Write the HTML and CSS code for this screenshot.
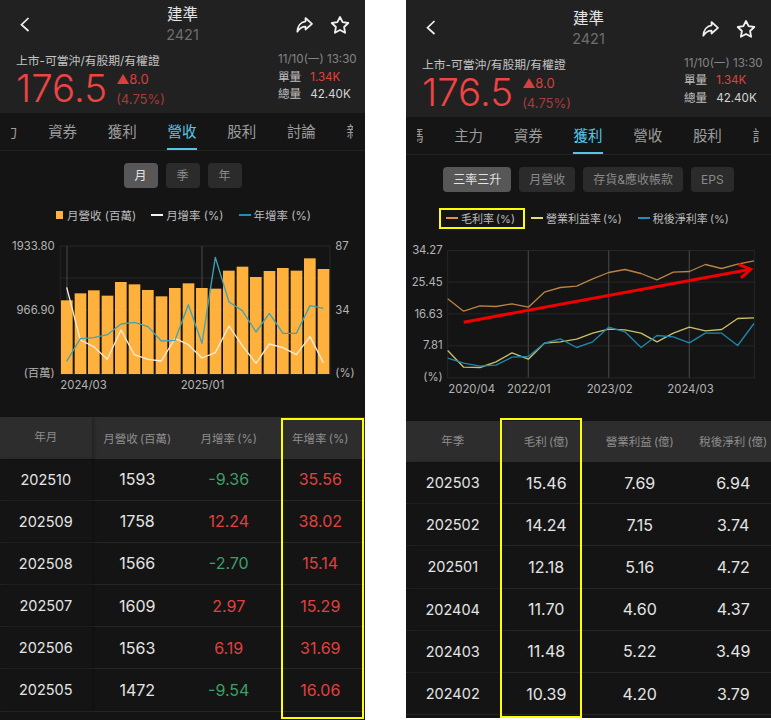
FILE: index.html
```html
<!DOCTYPE html>
<html lang="zh-Hant">
<head>
    <meta charset="UTF-8">
    <meta name="viewport" content="width=device-width, initial-scale=1.0">
    <title>建準 2421</title>
    <link rel="stylesheet" href="styles.css">
</head>
<body>
    <!-- 營收 -->
    <section class="phone phone-left">
        <header class="head">
            <div class="nav">
                <svg class="icon-back" viewBox="0 0 12 18"><polyline points="9.5,2 2.5,8.7 9.5,15"/></svg>
                <div class="name">
                    <div class="name-title">建準</div>
                    <div class="name-code">2421</div>
                </div>
                <div class="nav-icons">
                    <svg class="icon-share" viewBox="0 0 17 16"><path d="M9.5 1 L16 6.8 L9.5 12.5 V9.6 C6 9.6 3.5 11 1.3 14.7 C1.6 9.5 4.5 5 9.5 4.4 Z"/></svg>
                    <svg class="icon-star" viewBox="0 0 20 20"><polygon points="10,2 12.6,7.2 18.3,8 14.1,12 15.1,17.8 10,15 4.9,17.8 5.9,12 1.7,8 7.4,7.2"/></svg>
                </div>
            </div>
            <div class="quote">
                <div>
                    <div class="status">上市-可當沖/有股期/有權證</div>
                    <div class="price-row">
                        <div class="price">176.5</div>
                        <div class="delta">
                            <div class="delta-pts">▲8.0</div>
                            <div class="delta-pct">(4.75%)</div>
                        </div>
                    </div>
                </div>
                <div class="meta">
                    <div class="meta-time">11/10(一) 13:30</div>
                    <div class="meta-row"><span class="meta-key">單量</span><span class="up">1.34K</span></div>
                    <div class="meta-row"><span class="meta-key">總量</span><span>42.40K</span></div>
                </div>
            </div>
        </header>
        <nav class="tabs">
            <div class="tabs-track">
                <a class="tab">主力</a><a class="tab">資券</a><a class="tab">獲利</a><a class="tab active">營收</a><a class="tab">股利</a><a class="tab">討論</a><a class="tab">新聞</a>
            </div>
        </nav>
        <div class="chips">
            <span class="chip active">月</span><span class="chip">季</span><span class="chip">年</span>
        </div>
        <div class="legend legend-left">
            <span class="legend-item"><i class="swatch-box"></i>月營收 (百萬)</span>
            <span class="legend-item"><i class="dash dash-white"></i>月增率 (%)</span>
            <span class="legend-item"><i class="dash dash-blue"></i>年增率 (%)</span>
        </div>
        <svg class="chart" viewBox="0 105 1095 480">
            <g class="grid">
                <rect x="181" y="138" width="809" height="384"/>
                <line x1="181" y1="234" x2="990" y2="234"/>
                <line x1="181" y1="330" x2="990" y2="330"/>
                <line x1="181" y1="426" x2="990" y2="426"/>
            </g>
            <g class="vline">
                <line x1="201" y1="138" x2="201" y2="522"/>
                <line x1="606" y1="138" x2="606" y2="522"/>
            </g>
            <g class="bars">
                <rect x="183" y="301" width="35" height="221"/>
                <rect x="224" y="280" width="35" height="242"/>
                <rect x="264" y="271" width="35" height="251"/>
                <rect x="305" y="287" width="35" height="235"/>
                <rect x="345" y="246" width="35" height="276"/>
                <rect x="386" y="253" width="35" height="269"/>
                <rect x="426" y="270" width="35" height="252"/>
                <rect x="467" y="289" width="35" height="233"/>
                <rect x="507" y="264" width="35" height="258"/>
                <rect x="548" y="250" width="35" height="272"/>
                <rect x="588" y="264" width="35" height="258"/>
                <rect x="629" y="266" width="35" height="256"/>
                <rect x="669" y="212" width="35" height="310"/>
                <rect x="710" y="200" width="35" height="322"/>
                <rect x="750" y="231" width="35" height="291"/>
                <rect x="791" y="213" width="35" height="309"/>
                <rect x="831" y="204" width="35" height="318"/>
                <rect x="872" y="212" width="35" height="310"/>
                <rect x="912" y="175" width="35" height="347"/>
                <rect x="953" y="207" width="35" height="315"/>
            </g>
            <polyline class="line line-cream" points="200,262 241,420 281,440 322,478 363,390 403,464 444,478 484,483 525,415 565,434 606,474 646,458 687,378 727,437 768,490 808,432 849,443 889,464 930,410 970,488"/>
            <polyline class="line line-teal" points="200,484 241,416 281,413 322,404 363,372 403,367 444,380 484,423 525,421 565,314 606,430 646,172 687,306 727,332 768,396 808,340 849,400 889,400 930,317 970,325"/>
            <g class="axis">
                <text x="164" y="150" text-anchor="end">1933.80</text>
                <text x="164" y="342" text-anchor="end">966.90</text>
                <text x="164" y="530" text-anchor="end">(百萬)</text>
                <text x="1006" y="150">87</text>
                <text x="1006" y="342">34</text>
                <text x="1006" y="530">(%)</text>
                <text x="181" y="567">2024/03</text>
                <text x="542" y="567">2025/01</text>
            </g>
        </svg>
        <div class="table">
            <div class="row row-head"><div>年月</div><div>月營收 (百萬)</div><div>月增率 (%)</div><div>年增率 (%)</div></div>
            <div class="row"><div>202510</div><div>1593</div><div class="down">-9.36</div><div class="up">35.56</div></div>
            <div class="row"><div>202509</div><div>1758</div><div class="up">12.24</div><div class="up">38.02</div></div>
            <div class="row"><div>202508</div><div>1566</div><div class="down">-2.70</div><div class="up">15.14</div></div>
            <div class="row"><div>202507</div><div>1609</div><div class="up">2.97</div><div class="up">15.29</div></div>
            <div class="row"><div>202506</div><div>1563</div><div class="up">6.19</div><div class="up">31.69</div></div>
            <div class="row"><div>202505</div><div>1472</div><div class="down">-9.54</div><div class="up">16.06</div></div>
            <div class="mark mark-left"></div>
        </div>
    </section>

    <!-- 獲利 -->
    <section class="phone phone-right">
        <header class="head">
            <div class="nav">
                <svg class="icon-back" viewBox="0 0 12 18"><polyline points="9.5,2 2.5,8.7 9.5,15"/></svg>
                <div class="name">
                    <div class="name-title">建準</div>
                    <div class="name-code">2421</div>
                </div>
                <div class="nav-icons">
                    <svg class="icon-share" viewBox="0 0 17 16"><path d="M9.5 1 L16 6.8 L9.5 12.5 V9.6 C6 9.6 3.5 11 1.3 14.7 C1.6 9.5 4.5 5 9.5 4.4 Z"/></svg>
                    <svg class="icon-star" viewBox="0 0 20 20"><polygon points="10,2 12.6,7.2 18.3,8 14.1,12 15.1,17.8 10,15 4.9,17.8 5.9,12 1.7,8 7.4,7.2"/></svg>
                </div>
            </div>
            <div class="quote">
                <div>
                    <div class="status">上市-可當沖/有股期/有權證</div>
                    <div class="price-row">
                        <div class="price">176.5</div>
                        <div class="delta">
                            <div class="delta-pts">▲8.0</div>
                            <div class="delta-pct">(4.75%)</div>
                        </div>
                    </div>
                </div>
                <div class="meta">
                    <div class="meta-time">11/10(一) 13:30</div>
                    <div class="meta-row"><span class="meta-key">單量</span><span class="up">1.34K</span></div>
                    <div class="meta-row"><span class="meta-key">總量</span><span>42.40K</span></div>
                </div>
            </div>
        </header>
        <nav class="tabs">
            <div class="tabs-track">
                <a class="tab">籌碼</a><a class="tab">主力</a><a class="tab">資券</a><a class="tab active">獲利</a><a class="tab">營收</a><a class="tab">股利</a><a class="tab">討論</a>
            </div>
        </nav>
        <div class="chips">
            <span class="chip active">三率三升</span><span class="chip">月營收</span><span class="chip">存貨&amp;應收帳款</span><span class="chip">EPS</span>
        </div>
        <div class="legend legend-right">
            <span class="legend-item legend-marked"><i class="dash dash-orange"></i>毛利率 (%)</span>
            <span class="legend-item"><i class="dash dash-yellow"></i>營業利益率 (%)</span>
            <span class="legend-item"><i class="dash dash-blue"></i>稅後淨利率 (%)</span>
        </div>
        <svg class="chart" viewBox="0 115.5 1095 480">
            <g class="grid">
                <rect x="125" y="150" width="920" height="382"/>
                <line x1="125" y1="245" x2="1045" y2="245"/>
                <line x1="125" y1="340" x2="1045" y2="340"/>
                <line x1="125" y1="436" x2="1045" y2="436"/>
            </g>
            <g class="vline">
                <line x1="367" y1="150" x2="367" y2="532"/>
                <line x1="608" y1="150" x2="608" y2="532"/>
                <line x1="850" y1="150" x2="850" y2="532"/>
            </g>
            <polyline class="line line-orange" points="125,295 173,332 222,316 270,318 318,310 367,320 415,275 463,261 512,257 560,235 608,216 657,207 705,219 753,238 802,215 850,213 898,192 947,204 995,191 1044,181"/>
            <polyline class="line line-yellow" points="125,450 173,500 222,501 270,484 318,457 367,476 415,428 463,424 512,416 560,398 608,386 657,388 705,398 753,424 802,398 850,380 898,391 947,387 995,354 1044,352"/>
            <polyline class="line line-blue" points="125,473 173,488 222,497 270,494 318,470 367,468 415,428 463,415 512,441 560,424 608,380 657,394 705,441 753,405 802,409 850,427 898,398 947,398 995,435 1044,369"/>
            <g class="arrow">
                <line x1="173" y1="365" x2="1030" y2="207"/>
                <polyline points="998,192 1034,206 1005,232"/>
            </g>
            <g class="axis">
                <text x="110" y="160" text-anchor="end">34.27</text>
                <text x="110" y="256" text-anchor="end">25.45</text>
                <text x="110" y="351" text-anchor="end">16.63</text>
                <text x="110" y="446" text-anchor="end">7.81</text>
                <text x="110" y="542" text-anchor="end">(%)</text>
                <text x="127" y="577">2020/04</text>
                <text x="303" y="577">2022/01</text>
                <text x="542" y="577">2023/02</text>
                <text x="784" y="577">2024/03</text>
            </g>
        </svg>
        <div class="table table-wide">
            <div class="row row-head"><div>年季</div><div>毛利 (億)</div><div>營業利益 (億)</div><div>稅後淨利 (億)</div></div>
            <div class="row"><div>202503</div><div>15.46</div><div>7.69</div><div>6.94</div></div>
            <div class="row"><div>202502</div><div>14.24</div><div>7.15</div><div>3.74</div></div>
            <div class="row"><div>202501</div><div>12.18</div><div>5.16</div><div>4.72</div></div>
            <div class="row"><div>202404</div><div>11.70</div><div>4.60</div><div>4.37</div></div>
            <div class="row"><div>202403</div><div>11.48</div><div>5.22</div><div>3.49</div></div>
            <div class="row"><div>202402</div><div>10.39</div><div>4.20</div><div>3.79</div></div>
            <div class="mark mark-right"></div>
        </div>
    </section>
</body>
</html>
```

FILE: styles.css
```css
* {
    box-sizing: border-box;
}
html, body {
    height: 720px;
    overflow: hidden;
}
body {
    margin: 0;
    background: #fff;
    display: flex;
    justify-content: space-between;
    align-items: flex-start;
    font-family: Inter, "Noto Sans CJK TC", sans-serif;
    color: #e6e6e6;
}
.phone {
    width: 365px;
    background: #141414;
    overflow: hidden;
}
.phone-left {
    height: 720px;
}
.phone-right {
    height: 718px;
}
.up {
    color: #e0413f;
}
.down {
    color: #3f9e68;
}

/* header */
.head {
    background: #212121;
    height: 113px;
    padding-top: 5px;
}
.phone-right .head {
    height: 116.5px;
    padding-top: 8.5px;
}
.nav {
    display: grid;
    grid-template-columns: 1fr auto 1fr;
    align-items: center;
    height: 40px;
    padding: 0 15px;
}
.icon-back {
    width: 12px;
    height: 18px;
    margin: 0 0 1px 4px;
    fill: none;
    stroke: #f0f0f0;
    stroke-width: 1.7;
}
.name {
    text-align: center;
}
.name-title {
    font-size: 15.5px;
    line-height: 20px;
    color: #e4e4e4;
}
.name-code {
    font-size: 14.5px;
    line-height: 20px;
    color: #6e6e6e;
}
.nav-icons {
    display: flex;
    justify-content: flex-end;
    align-items: center;
    gap: 17px;
}
.icon-share {
    width: 17px;
    height: 16px;
    fill: none;
    stroke: #f0f0f0;
    stroke-width: 1.7;
    stroke-linejoin: round;
}
.icon-star {
    width: 20px;
    height: 20px;
    fill: none;
    stroke: #f0f0f0;
    stroke-width: 1.8;
    stroke-linejoin: round;
}
.quote {
    display: flex;
    justify-content: space-between;
    padding: 6px 9px 0 16px;
}
.status {
    margin-top: 3px;
    font-size: 11.8px;
    line-height: 14px;
    color: #c4c4c4;
}
.price-row {
    display: flex;
    align-items: flex-start;
}
.price {
    font-size: 38.5px;
    line-height: 40px;
    font-weight: 300;
    color: #ee4444;
}
.delta {
    margin-left: 9px;
    padding-top: 1px;
    font-size: 13px;
    line-height: 20px;
    color: #d8403e;
}
.delta-pct {
    color: #a63c3b;
}
.meta {
    width: 78px;
    font-size: 11.6px;
    line-height: 17.5px;
}
.meta-time {
    color: #858585;
    white-space: nowrap;
}
.meta-row {
    display: flex;
    gap: 9px;
    color: #d6d6d6;
}
.meta-key {
    color: #bdbdbd;
}

/* tabs */
.tabs {
    height: 38px;
    padding: 0 12px 0 11px;
    background: #151515;
    border-bottom: 1px solid #222;
}
.tabs-track {
    overflow: hidden;
    height: 100%;
    display: flex;
    justify-content: center;
}
.tab {
    flex: 0 0 59.7px;
    text-align: center;
    font-size: 14.5px;
    line-height: 37px;
    color: #9c9c9c;
    position: relative;
}
.tab.active {
    color: #57c6e6;
}
.tab.active::after {
    content: "";
    position: absolute;
    left: 15px;
    right: 15px;
    bottom: 0;
    height: 2px;
    background: #57c6e6;
}

/* chips */
.chips {
    display: flex;
    justify-content: center;
    gap: 8px;
    margin-top: 12px;
}
.chip {
    min-width: 34px;
    height: 25px;
    padding: 0 10px;
    border-radius: 4px;
    background: #2b2b2b;
    color: #8a8a8a;
    font-size: 12px;
    line-height: 25px;
    text-align: center;
    white-space: nowrap;
}
.chip.active {
    background: #575757;
    color: #e4e4e4;
}

/* legend */
.legend {
    display: flex;
    align-items: center;
    height: 21px;
    margin-top: 16px;
    font-size: 11.5px;
    color: #bcbcbc;
    white-space: nowrap;
}
.legend-left {
    padding-left: 56px;
    gap: 15px;
}
.legend-right {
    padding-left: 33px;
    gap: 16px;
    font-size: 11px;
    word-spacing: -1px;
}
.legend-item {
    display: flex;
    align-items: center;
}
.legend-marked {
    height: 21px;
    padding: 0 8px 0 5px;
    margin-right: -10px;
    border: 2px solid #ffff00;
}
.swatch-box {
    width: 7px;
    height: 8px;
    margin-right: 4px;
    background: #ffb13d;
}
.dash {
    width: 12px;
    height: 2px;
    margin-right: 3px;
}
.dash-white {
    background: #f2f2f2;
}
.dash-blue {
    background: #1f8fb5;
}
.dash-orange {
    background: #d9954a;
}
.dash-yellow {
    background: #e6dc72;
}

/* charts */
.chart {
    display: block;
    width: 365px;
    height: 160px;
    margin-top: 10px;
}
.grid rect, .grid line {
    fill: none;
    stroke: #262626;
    stroke-width: 3;
}
.vline line {
    stroke: #3d3d3d;
    stroke-width: 4;
}
.bars rect {
    fill: #ffb13d;
}
.line {
    fill: none;
    stroke-width: 4;
    stroke-linejoin: round;
}
.line-cream {
    stroke: #f6ecdc;
}
.line-teal {
    stroke: #3ea4b4;
}
.line-orange {
    stroke: #b98345;
}
.line-yellow {
    stroke: #c9c06a;
}
.line-blue {
    stroke: #1f86ab;
}
.arrow line, .arrow polyline {
    fill: none;
    stroke: #f00000;
    stroke-width: 9;
}
.axis text {
    font-size: 34px;
    fill: #b4b4b4;
}

/* table */
.table {
    position: relative;
    margin-top: 22px;
}
.row {
    display: grid;
    grid-template-columns: repeat(4, 91.5px);
    align-items: center;
    height: 42.2px;
    border-bottom: 1px solid #262626;
    font-size: 16px;
    text-align: center;
    color: #e4e4e4;
}
.table-wide .row {
    grid-template-columns: repeat(4, 93.5px);
}
.row > div:first-child {
    height: 100%;
    font-size: 14.5px;
    line-height: 41px;
    box-shadow: 2px 0 3px rgba(0, 0, 0, 0.25);
}
.row-head {
    height: 41.5px;
    background: #2d2d2d;
    border-bottom: 0;
    font-size: 11.5px;
    word-spacing: -1px;
    color: #8e8e8e;
}
.row-head > div:first-child {
    font-size: 11.5px;
}
.mark {
    position: absolute;
    border: 2px solid #ffff00;
}
.mark-left {
    top: 1px;
    left: 281px;
    width: 83px;
    height: 301px;
}
.mark-right {
    top: -3px;
    left: 94px;
    width: 82px;
    height: 300px;
}
```
